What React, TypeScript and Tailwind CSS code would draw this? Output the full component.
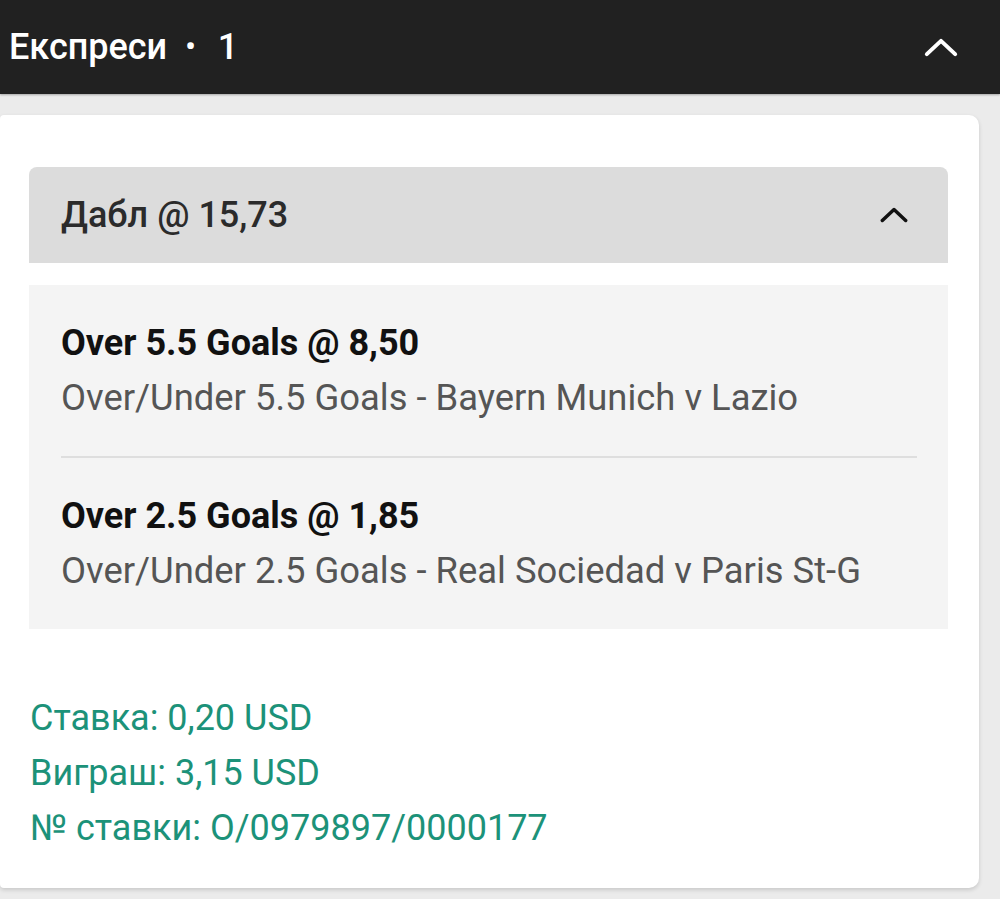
import React from "react";

function Chevron({ className, stroke, width }: { className: string; stroke: string; width: string }) {
  return (
    <svg className={className} viewBox="0 0 36 20" fill="none">
      <path d="M3 17 L18 3 L33 17" stroke={stroke} strokeWidth={width} strokeLinecap="round" strokeLinejoin="round" />
    </svg>
  );
}

function Selection({ title, sub }: { title: string; sub: string }) {
  return (
    <div className="flex flex-col gap-[15px] py-[38px]">
      <div className="text-[36px] leading-[40px] font-bold text-[#111]">{title}</div>
      <div className="text-[36.4px] leading-[40px] text-[#555]">{sub}</div>
    </div>
  );
}

export default function App() {
  return (
    <div className="w-[1000px] h-[899px] bg-[#ebebeb] overflow-hidden" style={{ fontFamily: "Roboto, 'Noto Sans', sans-serif" }}>
      <div className="h-[94px] bg-[#212121] flex items-center justify-between pl-[9px] pr-[42px] shadow-[0_1px_2px_rgba(0,0,0,0.3)]">
        <div className="text-white text-[36px] font-medium flex items-center leading-[40px]">
          <span>Експреси</span>
          <span className="ml-[18px] mr-[22px] text-[30px]">•</span>
          <span>1</span>
        </div>
        <Chevron className="w-[34px] h-[19px]" stroke="#ffffff" width="4.2" />
      </div>
      <div className="pt-[21px] pr-[21px]">
        <div className="bg-white rounded-r-[10px] rounded-l-[4px] shadow-[0_2px_4px_rgba(0,0,0,0.15)] pt-[52px] pb-[32px] px-[29px] pr-[31px]">
          <div className="h-[96px] bg-[#dcdcdc] rounded-t-[8px] flex items-center justify-between pl-[32px] pr-[40px]">
            <span className="text-[36px] font-medium text-[#2b2b2b]">Дабл @ 15,73</span>
            <Chevron className="w-[28px] h-[16px]" stroke="#111111" width="4.5" />
          </div>
          <div className="mt-[22px] bg-[#f4f4f4] px-[32px] pr-[31px]">
            <Selection title="Over 5.5 Goals @ 8,50" sub="Over/Under 5.5 Goals - Bayern Munich v Lazio" />
            <div className="h-[2px] bg-[#dedede]" />
            <Selection title="Over 2.5 Goals @ 1,85" sub="Over/Under 2.5 Goals - Real Sociedad v Paris St-G" />
          </div>
          <div className="mt-[62px] ml-[1px] text-[36px] leading-[55px] text-[#1c9279]">
            <div>Ставка: 0,20 USD</div>
            <div>Виграш: 3,15 USD</div>
            <div>№ ставки: O/0979897/0000177</div>
          </div>
        </div>
      </div>
    </div>
  );
}
